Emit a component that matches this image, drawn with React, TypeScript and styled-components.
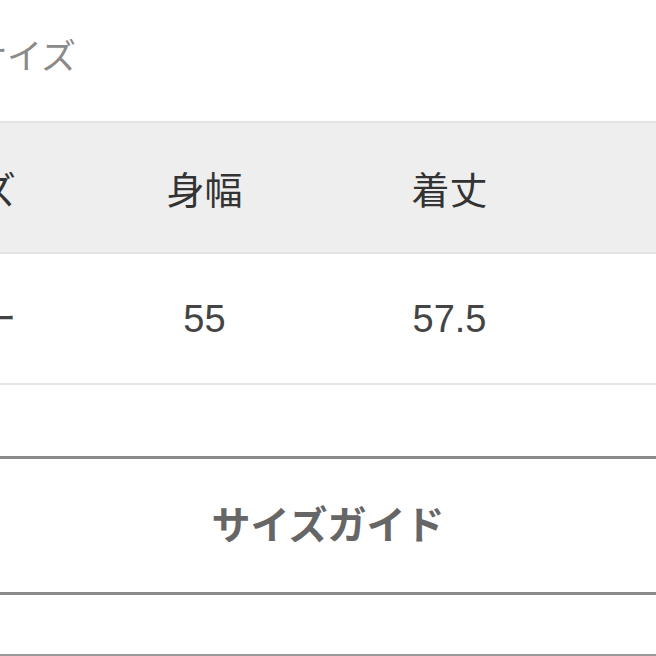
import React from "react"
import styled, { createGlobalStyle } from "styled-components"

const GlobalStyle = createGlobalStyle`
html, body {
  margin: 0;
  padding: 0;
  background: #ffffff;
  overflow: hidden;
}
body {
  font-family: "Noto Sans CJK JP", "Noto Sans", "Liberation Sans", sans-serif;
}
`

const columns = ["サイズ", "身幅", "着丈", "袖丈"]
const values = ["フリー", "55", "57.5", "61"]

const App = () => {
    return (
        <Page>
            <GlobalStyle />
            <Title>サイズ</Title>
            <Table>
                <HeadRow>
                    {columns.map((c) => (
                        <Cell key={c}>{c}</Cell>
                    ))}
                </HeadRow>
                <BodyRow>
                    {values.map((v) => (
                        <Cell key={v} $num>{v}</Cell>
                    ))}
                </BodyRow>
            </Table>
            <GuideButton>サイズガイド</GuideButton>
            <NextBlock />
        </Page>
    )
}

export default App

const Page = styled.div`
width: 656px;
height: 656px;
overflow: hidden;
display: flex;
flex-direction: column;`

const Title = styled.div`
margin: 30px 0 0 -28px;
height: 48px;
line-height: 48px;
font-size: 35px;
color: #8a8a8a;`

const Table = styled.div`
margin: 43px 0 0 -163px;
width: 980px;
display: flex;
flex-direction: column;`

const HeadRow = styled.div`
height: 129px;
display: grid;
grid-template-columns: repeat(4, 245px);
align-items: center;
background-color: #eeeeee;
border-top: 2px solid #e3e3e3;
border-bottom: 2px solid #e3e3e3;
color: #333333;`

const BodyRow = styled.div`
height: 129px;
display: grid;
grid-template-columns: repeat(4, 245px);
align-items: center;
border-bottom: 2px solid #e6e6e6;
color: #444444;`

const Cell = styled.div<{ $num?: boolean }>`
text-align: center;
font-size: 38px;
line-height: 40px;
font-family: ${(p) =>
    p.$num
        ? `"Liberation Sans", "Noto Sans CJK JP", sans-serif`
        : `"Noto Sans CJK JP", sans-serif`};`

const GuideButton = styled.div`
margin-top: 71px;
height: 129px;
border-top: 3px solid #8a8a8a;
border-bottom: 3px solid #8a8a8a;
display: flex;
align-items: center;
justify-content: center;
padding-bottom: 8px;
box-sizing: content-box;
font-size: 39px;
font-weight: bold;
color: #666666;`

const NextBlock = styled.div`
margin-top: 59px;
border-top: 2px solid #999999;`
